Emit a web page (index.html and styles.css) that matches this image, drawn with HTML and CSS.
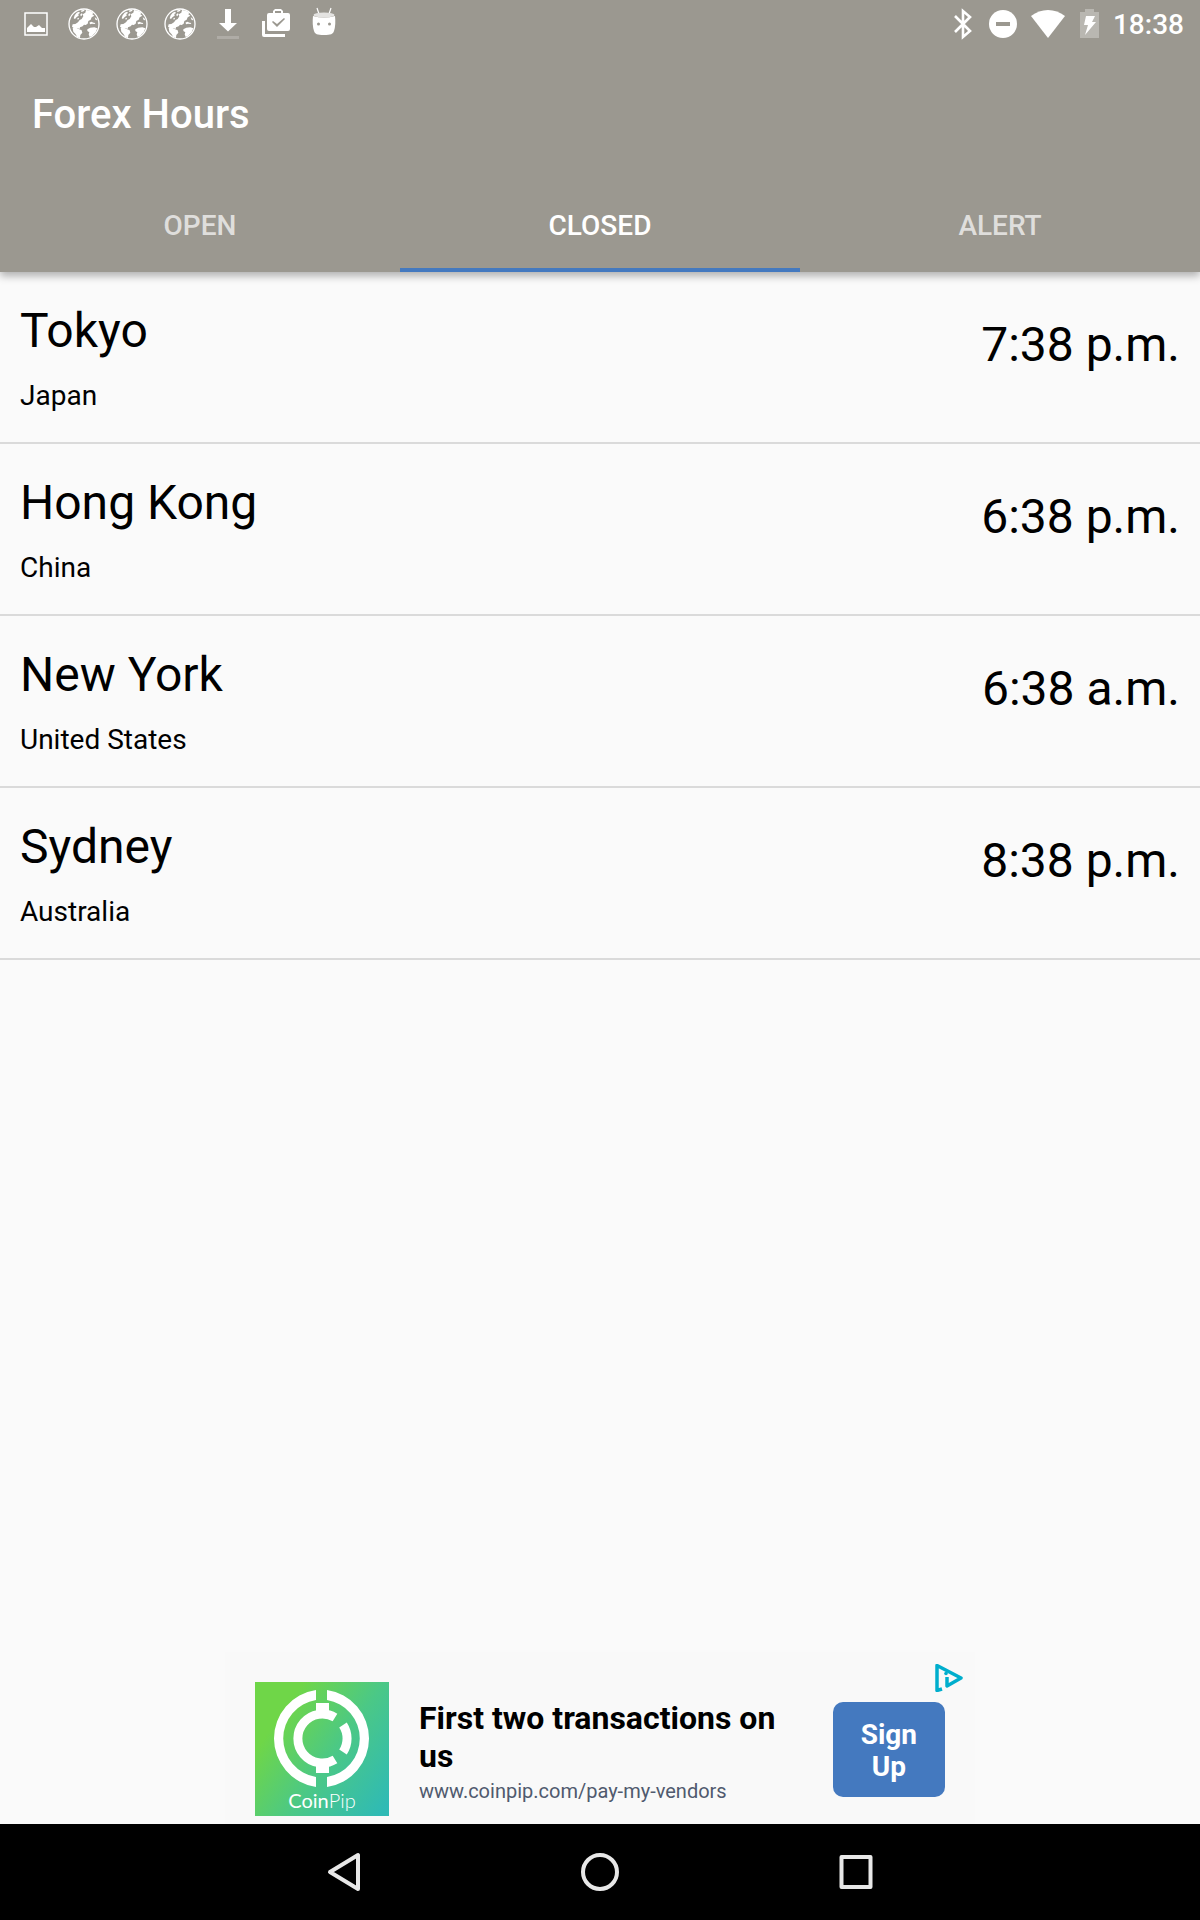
FILE: index.html
```
<!DOCTYPE html>
<html lang="en">
<head>
    <meta charset="UTF-8">
    <meta name="viewport" content="width=device-width, initial-scale=1.0">
    <title>Forex Hours</title>
    <link rel="stylesheet" href="styles.css">
</head>
<body>
    <svg class="sprite" aria-hidden="true">
        <symbol id="globe" viewBox="0 0 144 144">
            <circle cx="72" cy="72" r="45" fill="none" stroke="#fff" stroke-width="4"/>
            <path fill="#fff" d="M78 30l12 2 10 6-3 5 6 4-8 5-3 7-7 4-2 8-6 4-5-1-4 5-8 3-1 5-6-2-9 1-8-6 2-7 8-1 8-5 5-7 6-3 5-8-2-6 8-5z"/>
            <path fill="#fff" d="M38 84l10-1 8 4 9 4 2 7-6 7-1 9-8-2-5-9-7-8zM82 88l9-5 12-1 9 3-5 12-11 11-7 3-3-8 2-6-6-4z"/>
            <path fill="#fff" d="M44 46l6-8 7-3 3 4-5 3 1 5-6 4-5 6-4-2zM62 32l9-3 3 3-9 4zM60 45l5-5 3 2-4 7zM52 55l4-2 1 4-4 2zM88 68l6-3 7 3 5 1-2 3-8-1-5 2zM104 52l5 3 3 6-5-1z"/>
        </symbol>
    </svg>

    <header class="app-bar">
        <div class="status-bar">
            <div class="notifications">
                <svg class="icon" viewBox="0 0 48 48">
                    <rect x="13" y="13" width="22" height="22" fill="none" stroke="#fff" stroke-width="1.5"/>
                    <path fill="#fff" d="M15 32v-4l4-4 3 3h2l3-2 3 3h3v4z"/>
                </svg>
                <svg class="icon"><use href="#globe"/></svg>
                <svg class="icon"><use href="#globe"/></svg>
                <svg class="icon"><use href="#globe"/></svg>
                <svg class="icon" viewBox="0 0 48 48">
                    <path fill="#fff" d="M21 9h6v14h6l-9 8.500-9-8.500h6z"/>
                    <path fill="#fff" fill-opacity=".2" d="M13 36h22v3H13z"/>
                </svg>
                <svg class="icon" viewBox="0 0 48 48">
                    <path fill="#fff" fill-rule="evenodd" d="M17 13h4v-2l2-2h6l2 2v2h5q2 0 2 2v14q0 2-2 2H17q-2 0-2-2V15q0-2 2-2zM23 13h6v-2h-6zM20 22l5 5 8-8-1-1-7 6-4-3z"/>
                    <path fill="#fff" d="M10 21h3v13h20v3H12q-2 0-2-2z"/>
                </svg>
                <svg class="icon" viewBox="0 0 48 48">
                    <path fill="none" stroke="#fff" stroke-width="1.200" d="M17 8l2 6M31 8l-2 6"/>
                    <path fill="#fff" d="M13 16q11 3 22 0 1 9-1 15c-1 3-3 4-10 4s-9-1-10-4q-2-6-1-15z"/>
                    <ellipse cx="24" cy="15" rx="10.500" ry="2.500" fill="#e4e3e1"/>
                    <circle cx="18.500" cy="24" r="1.500" fill="#9b9890"/>
                    <circle cx="29.500" cy="24" r="1.500" fill="#9b9890"/>
                </svg>
            </div>
            <div class="system">
                <svg class="icon bluetooth" viewBox="0 0 40 48">
                    <path fill="none" stroke="#fff" stroke-width="2.600" d="M12 16l15 15-7 6V11l7 6-15 15"/>
                </svg>
                <svg class="icon dnd" viewBox="0 0 40 48">
                    <circle cx="20" cy="24" r="14" fill="#fff"/>
                    <path fill="#9b9890" d="M13 22h14v4H13z"/>
                </svg>
                <svg class="icon wifi" viewBox="0 0 50 48">
                    <path fill="#fff" d="M25 38L8 16C18 8 32 8 42 16z"/>
                </svg>
                <svg class="icon battery" viewBox="0 0 34 48">
                    <path fill="#fff" fill-opacity=".3" d="M12 9h9v3h5v26H7V12h5z"/>
                    <path fill="#fff" d="M13 16h9l-3 6h4L12 35l3-10h-4z"/>
                </svg>
                <time class="clock">18:38</time>
            </div>
        </div>

        <div class="toolbar">
            <h1>Forex Hours</h1>
        </div>

        <nav class="tabs">
            <button class="tab">OPEN</button>
            <button class="tab active">CLOSED</button>
            <button class="tab">ALERT</button>
        </nav>
    </header>

    <main>
        <ul class="markets">
            <li class="market">
                <div>
                    <h2 class="city">Tokyo</h2>
                    <p class="country">Japan</p>
                </div>
                <time class="time">7:38 p.m.</time>
            </li>
            <li class="market">
                <div>
                    <h2 class="city">Hong Kong</h2>
                    <p class="country">China</p>
                </div>
                <time class="time">6:38 p.m.</time>
            </li>
            <li class="market">
                <div>
                    <h2 class="city">New York</h2>
                    <p class="country">United States</p>
                </div>
                <time class="time">6:38 a.m.</time>
            </li>
            <li class="market">
                <div>
                    <h2 class="city">Sydney</h2>
                    <p class="country">Australia</p>
                </div>
                <time class="time">8:38 p.m.</time>
            </li>
        </ul>
    </main>

    <aside class="ad">
        <svg class="ad-logo" viewBox="0 0 134 134">
            <defs>
                <linearGradient id="logo-fill" x1="0" y1="0.2" x2="1" y2="0.9">
                    <stop offset="0.15" stop-color="#6fd648"/>
                    <stop offset="0.55" stop-color="#4bc886"/>
                    <stop offset="1" stop-color="#2fbab5"/>
                </linearGradient>
            </defs>
            <rect width="134" height="134" fill="url(#logo-fill)"/>
            <path fill="#fff" d="M61 8A49 49 0 0 0 61 105V95A39 39 0 0 1 61 18zM72 8A49 49 0 0 1 72 105V95A39 39 0 0 0 72 18z"/>
            <path fill="none" stroke="#fff" stroke-width="9" d="M80 35.500A24.500 24.500 0 1 0 80 77.500M88 43A24.500 24.500 0 0 1 88 70"/>
            <path fill="#fff" d="M61 21h13v11H61zM61 81h13v10H61z"/>
            <text class="logo-text" x="67" y="126" text-anchor="middle">Coin<tspan class="logo-thin">Pip</tspan></text>
        </svg>
        <div class="ad-text">
            <p class="ad-title">First two transactions on us</p>
            <a class="ad-link" href="#">www.coinpip.com/pay-my-vendors</a>
        </div>
        <button class="sign-up">Sign<br>Up</button>
        <a class="ad-choices" href="#" aria-label="AdChoices">
            <svg viewBox="0 0 28 28">
                <path fill="none" stroke="#00aecd" stroke-width="3.500" stroke-linejoin="round" d="M7 25l-5 1.500V1.500L26 14 12 22V13"/>
                <circle cx="11" cy="9.500" r="1.800" fill="#00aecd"/>
            </svg>
        </a>
    </aside>

    <footer class="nav-bar">
        <button class="nav-button" aria-label="Back">
            <svg viewBox="0 0 48 48"><path d="M38 7v34L10 24z"/></svg>
        </button>
        <button class="nav-button" aria-label="Home">
            <svg viewBox="0 0 48 48"><circle cx="24" cy="24" r="17"/></svg>
        </button>
        <button class="nav-button" aria-label="Recent apps">
            <svg viewBox="0 0 48 48"><rect x="9.500" y="9" width="29" height="30"/></svg>
        </button>
    </footer>
</body>
</html>
```
FILE: styles.css
```
* {
    box-sizing: border-box;
    margin: 0;
    padding: 0;
}
body {
    font-family: Roboto, "Liberation Sans", sans-serif;
    background-color: #fafafa;
    color: black;
    min-height: 100vh;
    display: flex;
    flex-direction: column;
}
button {
    font-family: inherit;
    border: none;
    cursor: pointer;
}
svg {
    display: block;
}
.sprite {
    position: absolute;
    width: 0;
    height: 0;
}

/* Header */
.app-bar {
    background-color: #9b9890;
    color: white;
    box-shadow: 0 4px 8px rgba(0, 0, 0, 0.3);
}
.status-bar {
    display: flex;
    justify-content: space-between;
    height: 48px;
    padding: 0 16px 0 12px;
}
.notifications, .system {
    display: flex;
    align-items: center;
}
.icon {
    width: 48px;
    height: 48px;
}
.bluetooth, .dnd {
    width: 40px;
}
.wifi {
    width: 50px;
}
.battery {
    width: 34px;
    margin-right: 6px;
}
.clock {
    padding-top: 2px;
    font-size: 28px;
    font-weight: 500;
    line-height: 32px;
}
.toolbar {
    display: flex;
    align-items: center;
    height: 128px;
    padding: 4px 32px 0;
}
.toolbar h1 {
    font-size: 40px;
    font-weight: 500;
}
.tabs {
    display: grid;
    grid-template-columns: repeat(3, 1fr);
}
.tab {
    height: 96px;
    padding-top: 6px;
    font-size: 28px;
    font-weight: 500;
    color: rgba(255, 255, 255, 0.7);
    background: none;
    border-bottom: 4px solid transparent;
}
.tab.active {
    color: white;
    border-bottom-color: #4479bf;
}

/* Market list */
main {
    flex: 1;
}
.markets {
    list-style: none;
}
.market {
    display: flex;
    justify-content: space-between;
    align-items: flex-start;
    padding: 30px 20px;
    border-bottom: 2px solid #dadada;
}
.city, .time {
    font-size: 48px;
    font-weight: 400;
    line-height: 58px;
}
.country {
    margin-top: 20px;
    font-size: 28px;
    line-height: 32px;
}
.time {
    margin-top: 14px;
}

/* Ad banner */
.ad {
    position: relative;
    display: flex;
    align-items: center;
    gap: 30px;
    width: 100%;
    max-width: 750px;
    margin: 0 auto;
    padding: 30px 30px 8px;
    background-color: #f9f9f9;
}
.ad-logo {
    flex: none;
    width: 134px;
    height: 134px;
}
.logo-text {
    font-family: Lato, sans-serif;
    font-size: 20px;
    fill: white;
}
.logo-thin {
    font-weight: 300;
}
.ad-text {
    flex: 1;
    padding-top: 8px;
}
.ad-title {
    font-size: 32px;
    font-weight: 700;
    line-height: 38px;
}
.ad-link {
    display: block;
    font-size: 20px;
    line-height: 32px;
    color: #505a6e;
    text-decoration: none;
}
.sign-up {
    padding: 17px 28px 14px;
    font-size: 28px;
    font-weight: 700;
    line-height: 32px;
    color: white;
    background-color: #4479bf;
    border-radius: 10px;
}
.ad-choices {
    position: absolute;
    top: 12px;
    right: 12px;
    width: 28px;
}

/* System navigation */
.nav-bar {
    display: flex;
    justify-content: center;
    align-items: center;
    gap: 208px;
    height: 96px;
    background-color: black;
}
.nav-button {
    width: 48px;
    background: none;
}
.nav-button svg {
    fill: none;
    stroke: #e8e8e8;
    stroke-width: 4;
    stroke-linejoin: round;
}
```
